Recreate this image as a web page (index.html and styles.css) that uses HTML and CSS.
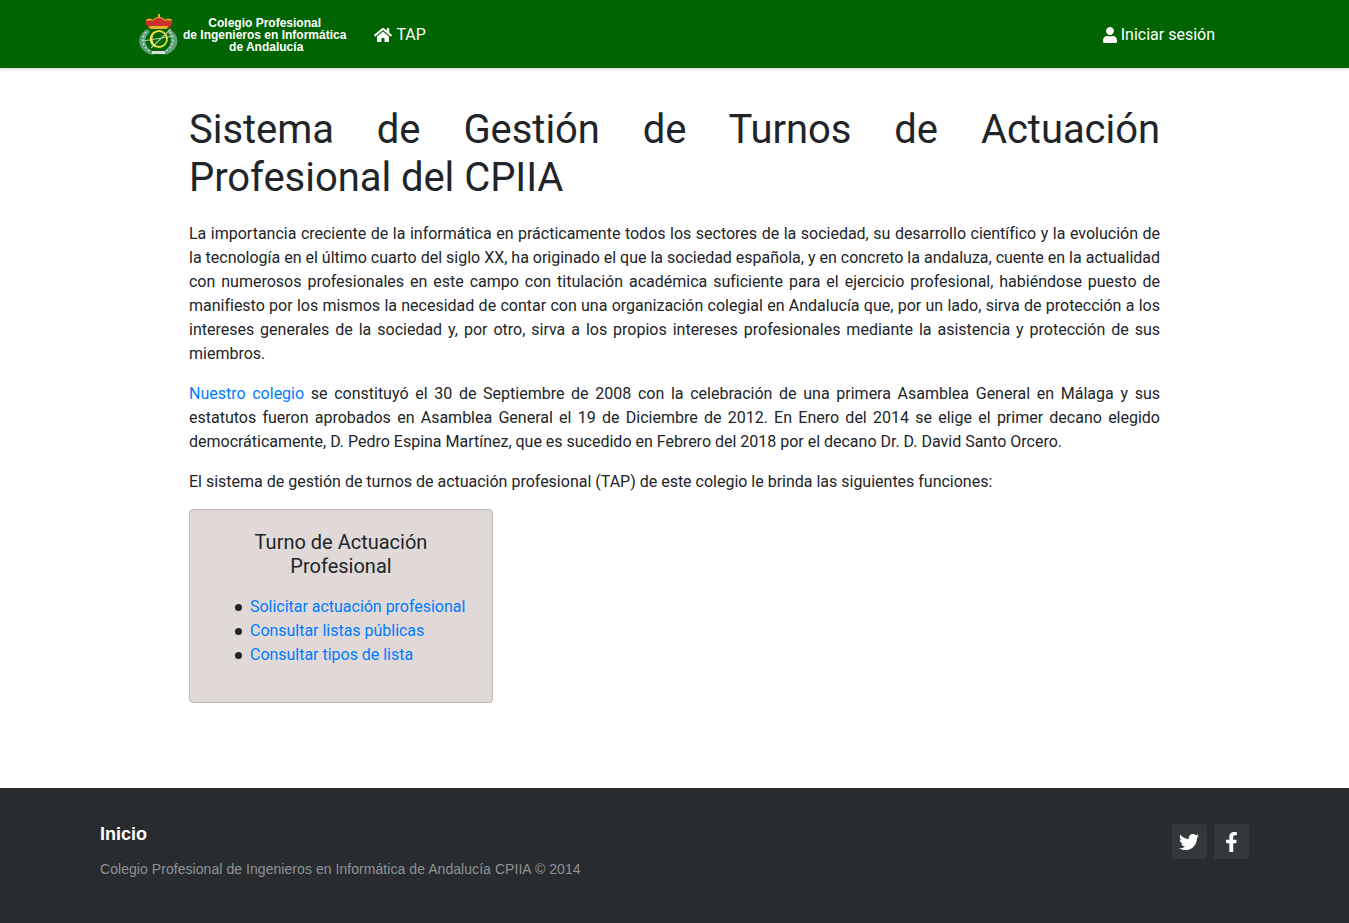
FILE: index.html
```html
<!doctype html>
<html lang="es">
<head>
	<meta charset="UTF-8">
	<title>TAP - CPIIA</title>
	<link rel="stylesheet" href="styles.css">
</head>
<body>
<nav class="topbar">
	<a class="brand" href="#">
		<svg class="emblem" viewBox="0 0 40 42" aria-hidden="true">
			<path class="laurel" d="M10 15C0 19-3 32 9 39c4 2 7 2 9 0C9 36 3 26 12 18z"/>
			<path class="laurel" d="M31 15c10 4 12 17 1 24-4 2-8 2-10 0 9-3 15-13 7-21z"/>
			<path class="leaves" d="M8 18C3 24 4 33 12 37M32 18c5 6 4 15-4 19"/>
			<path class="crown" d="M8 6c2-2 6-1 7 0 1-2 4-3 6-3s5 1 6 3c1-1 5-2 7 0 1 3 0 6-3 8H11C8 12 7 9 8 6z"/>
			<path class="crown-gold" d="M11 12h19l-1 3H12zM20 0h2v4h-2zM8 6c2-2 6-1 7 0 1-2 4-3 6-3s5 1 6 3c1-1 5-2 7 0l-1 1c-2-1-5-1-6 0-2-2-4-3-6-3s-5 1-6 3c-1-1-4-1-6 0z"/>
			<path class="cross" d="M5 27L36 22M13 34L33 15"/>
			<circle class="ring" cx="21" cy="25" r="8"/>
			<path class="crescent" d="M17 17c-6 3-7 11-2 15 2 1 3 1 4 1-5-3-6-11-2-16z"/>
			<path class="ribbon" d="M14 37h13v3H14z"/>
		</svg>
		<span class="brand-name">Colegio Profesional<br>de Ingenieros en Informática<br><span class="brand-last">de Andalucía</span></span>
	</a>
	<a class="nav-link" href="#">
		<svg class="ico ico-home" viewBox="0 0 576 512" aria-hidden="true"><path d="M280.37 148.26L96 300.11V464a16 16 0 0 0 16 16l112.06-.29a16 16 0 0 0 15.92-16V368a16 16 0 0 1 16-16h64a16 16 0 0 1 16 16v95.64a16 16 0 0 0 16 16.05L464 480a16 16 0 0 0 16-16V300L295.67 148.26a12.19 12.19 0 0 0-15.3 0zM571.6 251.47L488 182.56V44.05a12 12 0 0 0-12-12h-56a12 12 0 0 0-12 12v72.61L318.47 43a48 48 0 0 0-61 0L4.34 251.47a12 12 0 0 0-1.6 16.9l25.5 31A12 12 0 0 0 45.15 301l235.22-193.74a12.19 12.19 0 0 1 15.3 0L530.9 301a12 12 0 0 0 16.9-1.6l25.5-31a12 12 0 0 0-1.7-16.93z"/></svg>
		TAP
	</a>
	<a class="nav-link login" href="#">
		<svg class="ico ico-user" viewBox="0 0 448 512" aria-hidden="true"><path d="M224 256c70.7 0 128-57.3 128-128S294.7 0 224 0 96 57.3 96 128s57.3 128 128 128zm89.6 32h-16.7c-22.2 10.2-46.9 16-72.9 16s-50.6-5.8-72.9-16h-16.7C60.2 288 0 348.2 0 422.4V464c0 26.5 21.5 48 48 48h352c26.5 0 48-21.5 48-48v-41.6c0-74.2-60.2-134.4-134.4-134.4z"/></svg>
		Iniciar sesión
	</a>
</nav>

<main class="content">
	<h1>Sistema de Gestión de Turnos de Actuación Profesional del CPIIA</h1>
	<p>La importancia creciente de la informática en prácticamente todos los sectores de la sociedad, su desarrollo científico y la evolución de la tecnología en el último cuarto del siglo XX, ha originado el que la sociedad española, y en concreto la andaluza, cuente en la actualidad con numerosos profesionales en este campo con titulación académica suficiente para el ejercicio profesional, habiéndose puesto de manifiesto por los mismos la necesidad de contar con una organización colegial en Andalucía que, por un lado, sirva de protección a los intereses generales de la sociedad y, por otro, sirva a los propios intereses profesionales mediante la asistencia y protección de sus miembros.</p>
	<p><a href="#">Nuestro colegio</a> se constituyó el 30 de Septiembre de 2008 con la celebración de una primera Asamblea General en Málaga y sus estatutos fueron aprobados en Asamblea General el 19 de Diciembre de 2012. En Enero del 2014 se elige el primer decano elegido democráticamente, D. Pedro Espina Martínez, que es sucedido en Febrero del 2018 por el decano Dr. D. David Santo Orcero.</p>
	<p class="intro">El sistema de gestión de turnos de actuación profesional (TAP) de este colegio le brinda las siguientes funciones:</p>
	<section class="card">
		<h2>Turno de Actuación Profesional</h2>
		<ul>
			<li><a href="#">Solicitar actuación profesional</a></li>
			<li><a href="#">Consultar listas públicas</a></li>
			<li><a href="#">Consultar tipos de lista</a></li>
		</ul>
	</section>
</main>

<footer class="footer">
	<div>
		<a class="footer-title" href="#">Inicio</a>
		<p class="footer-copy">Colegio Profesional de Ingenieros en Informática de Andalucía CPIIA © 2014</p>
	</div>
	<div class="social">
		<a href="#"><svg class="ico-twitter" viewBox="0 0 512 512" aria-hidden="true"><path d="M459.37 151.716c.325 4.548.325 9.097.325 13.645 0 138.72-105.583 298.558-298.558 298.558-59.452 0-114.68-17.219-161.137-47.106 8.447.974 16.568 1.299 25.34 1.299 49.055 0 94.213-16.568 130.274-44.832-46.132-.975-84.792-31.188-98.112-72.772 6.498.974 12.995 1.624 19.818 1.624 9.421 0 18.843-1.3 27.614-3.573-48.081-9.747-84.143-51.98-84.143-102.985v-1.299c13.969 7.797 30.214 12.67 47.431 13.319-28.264-18.843-46.781-51.005-46.781-87.391 0-19.492 5.197-37.36 14.294-52.954 51.655 63.675 129.3 105.258 216.365 109.807-1.624-7.797-2.599-15.918-2.599-24.04 0-57.828 46.782-104.934 104.934-104.934 30.213 0 57.502 12.67 76.67 33.137 23.715-4.548 46.456-13.32 66.599-25.34-7.798 24.366-24.366 44.833-46.132 57.827 21.117-2.273 41.584-8.122 60.426-16.243-14.292 20.791-32.161 39.308-52.628 54.253z"/></svg></a>
		<a href="#"><svg class="ico-facebook" viewBox="0 0 320 512" aria-hidden="true"><path d="M279.14 288l14.22-92.66h-88.91v-60.13c0-25.35 12.42-50.06 52.24-50.06h40.42V6.26S260.43 0 225.36 0c-73.22 0-121.08 44.38-121.08 124.72v70.62H22.89V288h81.39v224h100.17V288z"/></svg></a>
	</div>
</footer>
</body>
</html>
```

FILE: styles.css
```css
body,h1,h2,p,ul{margin:0;padding:0;}
body{
	font-family:Roboto,"Liberation Sans",sans-serif;
	font-size:16px;
	line-height:24px;
	color:#212529;
	background:#fff;
}
a{color:#007bff;text-decoration:none;}

.topbar{
	display:flex;
	align-items:center;
	height:68px;
	padding:0 134px 0 138px;
	background:#006400;
	box-shadow:0 1px 3px rgba(0,0,0,.2);
}
.brand{
	display:flex;
	align-items:center;
	gap:5px;
	margin-right:28px;
	color:#fff;
}
.emblem{width:40px;height:42px;margin-top:2px;}
.laurel{fill:#5f9f7c;}
.leaves{fill:none;stroke:#cfe3d6;stroke-width:1.4;stroke-dasharray:2 2;}
.crown{fill:#c8322a;}
.crown-gold{fill:#e0b030;}
.cross{fill:none;stroke:#a9cfa0;stroke-width:1.2;}
.ring{fill:none;stroke:#e8d84a;stroke-width:1.8;}
.crescent{fill:#f0e060;}
.ribbon{fill:#d8e2dc;}
.brand-name{
	margin-top:2px;
	font-family:"Liberation Sans",Arial,sans-serif;
	font-size:12px;
	font-weight:bold;
	line-height:12px;
	text-align:center;
	white-space:nowrap;
}
.brand-last{margin-left:3px;}
.nav-link{
	display:flex;
	align-items:center;
	gap:4px;
	margin-top:2px;
	color:#fff;
}
.login{margin-left:auto;}
.ico{fill:#fff;height:16px;}
.ico-home{width:18px;}
.ico-user{width:14px;}

.content{
	width:971px;
	margin:0 auto;
	padding:38px 0 85px;
}
.content h1{
	font-size:40px;
	font-weight:400;
	line-height:48px;
	letter-spacing:-.05px;
	text-align:justify;
	margin-bottom:20px;
}
.content p{
	letter-spacing:-.006px;
	text-align:justify;
	margin-bottom:16px;
}
.content .intro{margin-bottom:15px;}

.card{
	width:304px;
	box-sizing:border-box;
	padding:20px;
	background:#e0d9d8;
	border:1px solid #bdb8b8;
	border-radius:4px;
}
.card h2{
	font-size:20px;
	font-weight:400;
	line-height:24px;
	text-align:center;
	margin-bottom:17px;
}
.card ul{
	padding-left:40px;
	margin-bottom:15px;
	list-style:none;
	letter-spacing:-.02px;
}
.card li{position:relative;}
.card li::before{
	content:"";
	position:absolute;
	left:-15px;
	top:9px;
	width:7px;
	height:7px;
	border-radius:50%;
	background:#212529;
}

.footer{
	display:flex;
	justify-content:space-between;
	height:135px;
	box-sizing:border-box;
	padding:36px 100px 0;
	background:#292c2f;
	font-family:"Liberation Sans",Arial,sans-serif;
}
.footer-title{
	display:block;
	color:#fff;
	font-size:18px;
	font-weight:bold;
	line-height:20px;
}
.footer .footer-copy{
	margin-top:15px;
	color:#8f9296;
	font-size:14px;
	line-height:20px;
	letter-spacing:.055px;
}
.social{
	display:flex;
	gap:7px;
}
.social a{
	display:flex;
	align-items:center;
	justify-content:center;
	width:35px;
	height:35px;
	background:#33383b;
	border-radius:2px;
}
.social svg{fill:#fff;height:20px;}
.ico-twitter{width:20px;margin-right:1px;}
.ico-facebook{width:13px;}
```
